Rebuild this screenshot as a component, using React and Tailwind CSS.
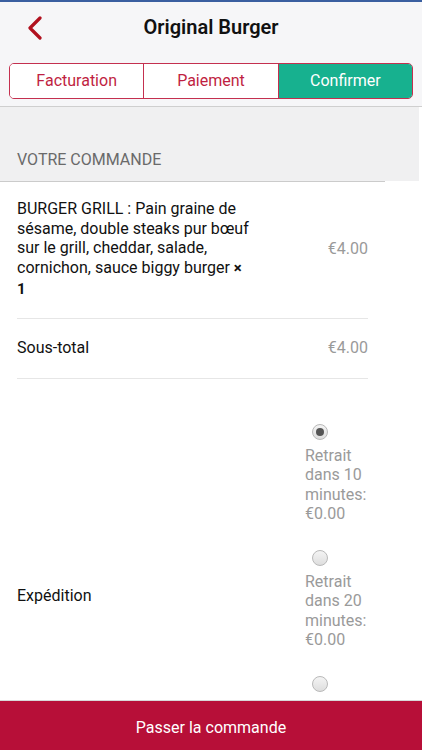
import { useState } from "react";

const font = { fontFamily: "Roboto, 'Noto Sans', sans-serif" };

function Radio({ checked }) {
    return (
        <span className="ml-[7px] flex size-[16px] items-center justify-center rounded-full border border-[#b9b9b9] bg-gradient-to-b from-[#f4f4f4] to-[#dedede]">
            {checked && <span className="size-[8px] rounded-full bg-[#555]"></span>}
        </span>
    );
}

function Segments() {
    const tabs = ["Facturation", "Paiement", "Confirmer"];
    return (
        <div className="mx-[9px] mt-[11px] flex h-[36px] overflow-hidden rounded-[5px] border border-[#c4304f]">
            {tabs.map((t, i) => (
                <div
                    key={t}
                    className={
                        "flex flex-1 items-center justify-center text-[16px] " +
                        (i > 0 ? "border-l border-[#c4304f] " : "") +
                        (i === 2 ? "bg-[#17b18f] text-white" : "bg-white text-[#c01f42]")
                    }
                >
                    {t}
                </div>
            ))}
        </div>
    );
}

export default function App() {
    const [shipping, setShipping] = useState(0);
    const options = ["Retrait dans 10 minutes: €0.00", "Retrait dans 20 minutes: €0.00", "Retrait dans 30 minutes: €0.00"];

    return (
        <div style={font} className="flex h-[750px] w-[422px] flex-col overflow-hidden bg-white">
            <header className="border-t-2 border-b border-t-[#3a5fa0] border-b-[#cfcfcf] bg-[#f6f6f8] pb-[7px]">
                <div className="relative flex h-[50px] items-center justify-center">
                    <svg className="absolute left-[27px] top-[14px]" width="16" height="24" viewBox="0 0 16 24">
                        <polyline points="13,2 3,12 13,22" fill="none" stroke="#b1111f" strokeWidth="3.2" strokeLinecap="round" strokeLinejoin="round" />
                    </svg>
                    <h1 className="text-[20px] font-semibold text-[#111]">Original Burger</h1>
                </div>
                <Segments />
            </header>

            <div className="flex-1 overflow-hidden">
                <div className="flex h-[74px] w-[419px] items-end bg-[#f0f0f1] pb-[9px] pl-[17px]">
                    <p className="text-[16px] text-[#6a6a6a]">VOTRE COMMANDE</p>
                </div>
                <div className="h-px w-[385px] bg-[#cbcbcb]"></div>
                <div className="w-[385px] px-[17px]">
                    <div className="flex items-center justify-between border-b border-[#e6e6e6] pt-[17px] pb-[18px]">
                        <p className="w-[240px] text-[16px] leading-[19.7px] text-[#111]">
                            BURGER GRILL : Pain graine de sésame, double steaks pur bœuf sur le grill, cheddar, salade, cornichon, sauce biggy burger{" "}
                            <b className="text-[15px]">
                                ×<br />1
                            </b>
                        </p>
                        <span className="text-[16px] text-[#9a9a9a]">€4.00</span>
                    </div>
                    <div className="flex h-[60px] items-center justify-between border-b border-[#e6e6e6]">
                        <p className="text-[16px] text-[#111]">Sous-total</p>
                        <span className="text-[16px] text-[#9a9a9a]">€4.00</span>
                    </div>
                    <div className="flex items-center justify-between pt-[19px]">
                        <p className="text-[16px] text-[#111]">Expédition</p>
                        <div className="flex w-[63px] flex-col pb-[18px]">
                            {options.map((o, i) => (
                                <label key={o} onClick={() => setShipping(i)} className="flex flex-col pt-[26px]">
                                    <Radio checked={shipping === i} />
                                    <span className="mt-[6px] text-[16px] leading-[19.5px] text-[#9a9a9a]">{o}</span>
                                </label>
                            ))}
                        </div>
                    </div>
                </div>
            </div>

            <button className="flex h-[50px] shrink-0 items-center justify-center border-t border-[#d8d8d8] bg-[#b70f38] pt-[5px] text-[16px] text-white">
                Passer la commande
            </button>
        </div>
    );
}
